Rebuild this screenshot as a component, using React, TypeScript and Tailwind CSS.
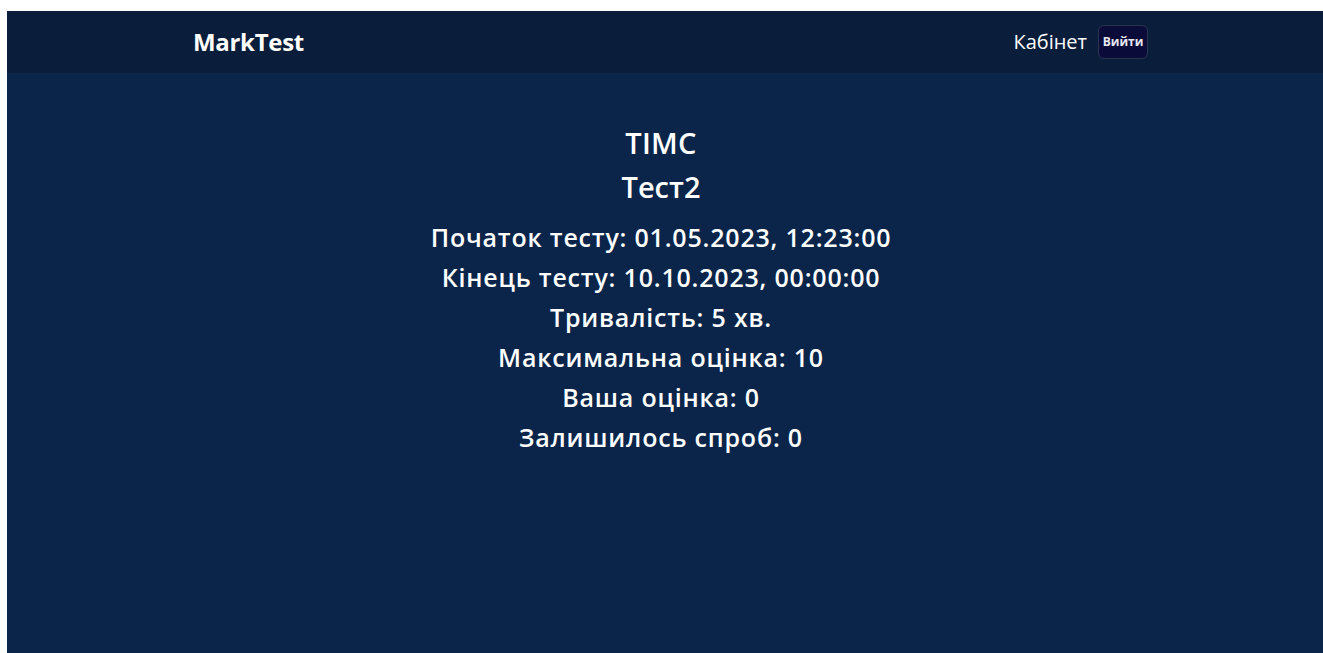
import React from "react";

const font = { fontFamily: '"Open Sans", "Noto Sans", sans-serif' };

const rows = [
  "Початок тесту: 01.05.2023, 12:23:00",
  "Кінець тесту: 10.10.2023, 00:00:00",
  "Тривалість: 5 хв.",
  "Максимальна оцінка: 10",
  "Ваша оцінка: 0",
  "Залишилось спроб: 0",
];

export default function App() {
  return (
    <div className="bg-white pt-[11px] pl-[7px] h-[653px] w-full overflow-hidden" style={font}>
      <div className="flex flex-col h-full bg-[#0a2549] text-white">
        <header className="h-[62px] shrink-0 bg-[#0a1d3a] flex items-center justify-between pl-[186px] pr-[175px]">
          <div className="text-[24px] font-bold tracking-[-0.3px]">MarkTest</div>
          <div className="flex items-center gap-[11px]">
            <span className="text-[20px]">Кабінет</span>
            <button className="h-[34px] w-[50px] rounded-[6px] bg-[#0b0b3a] border border-[#2a3450] text-[12px] font-bold text-[#e8e8f0]">
              Вийти
            </button>
          </div>
        </header>
        <main className="flex flex-col items-center pt-[48px] pr-[8px]">
          <h1 className="text-[29px] font-semibold leading-[44px] tracking-[0.3px]">TIMC</h1>
          <h2 className="text-[29px] font-semibold leading-[44px] mb-[8px]">Тест2</h2>
          {rows.map((r) => (
            <p key={r} className="text-[25px] font-semibold leading-[40px] tracking-[0.8px]">
              {r}
            </p>
          ))}
        </main>
      </div>
    </div>
  );
}
